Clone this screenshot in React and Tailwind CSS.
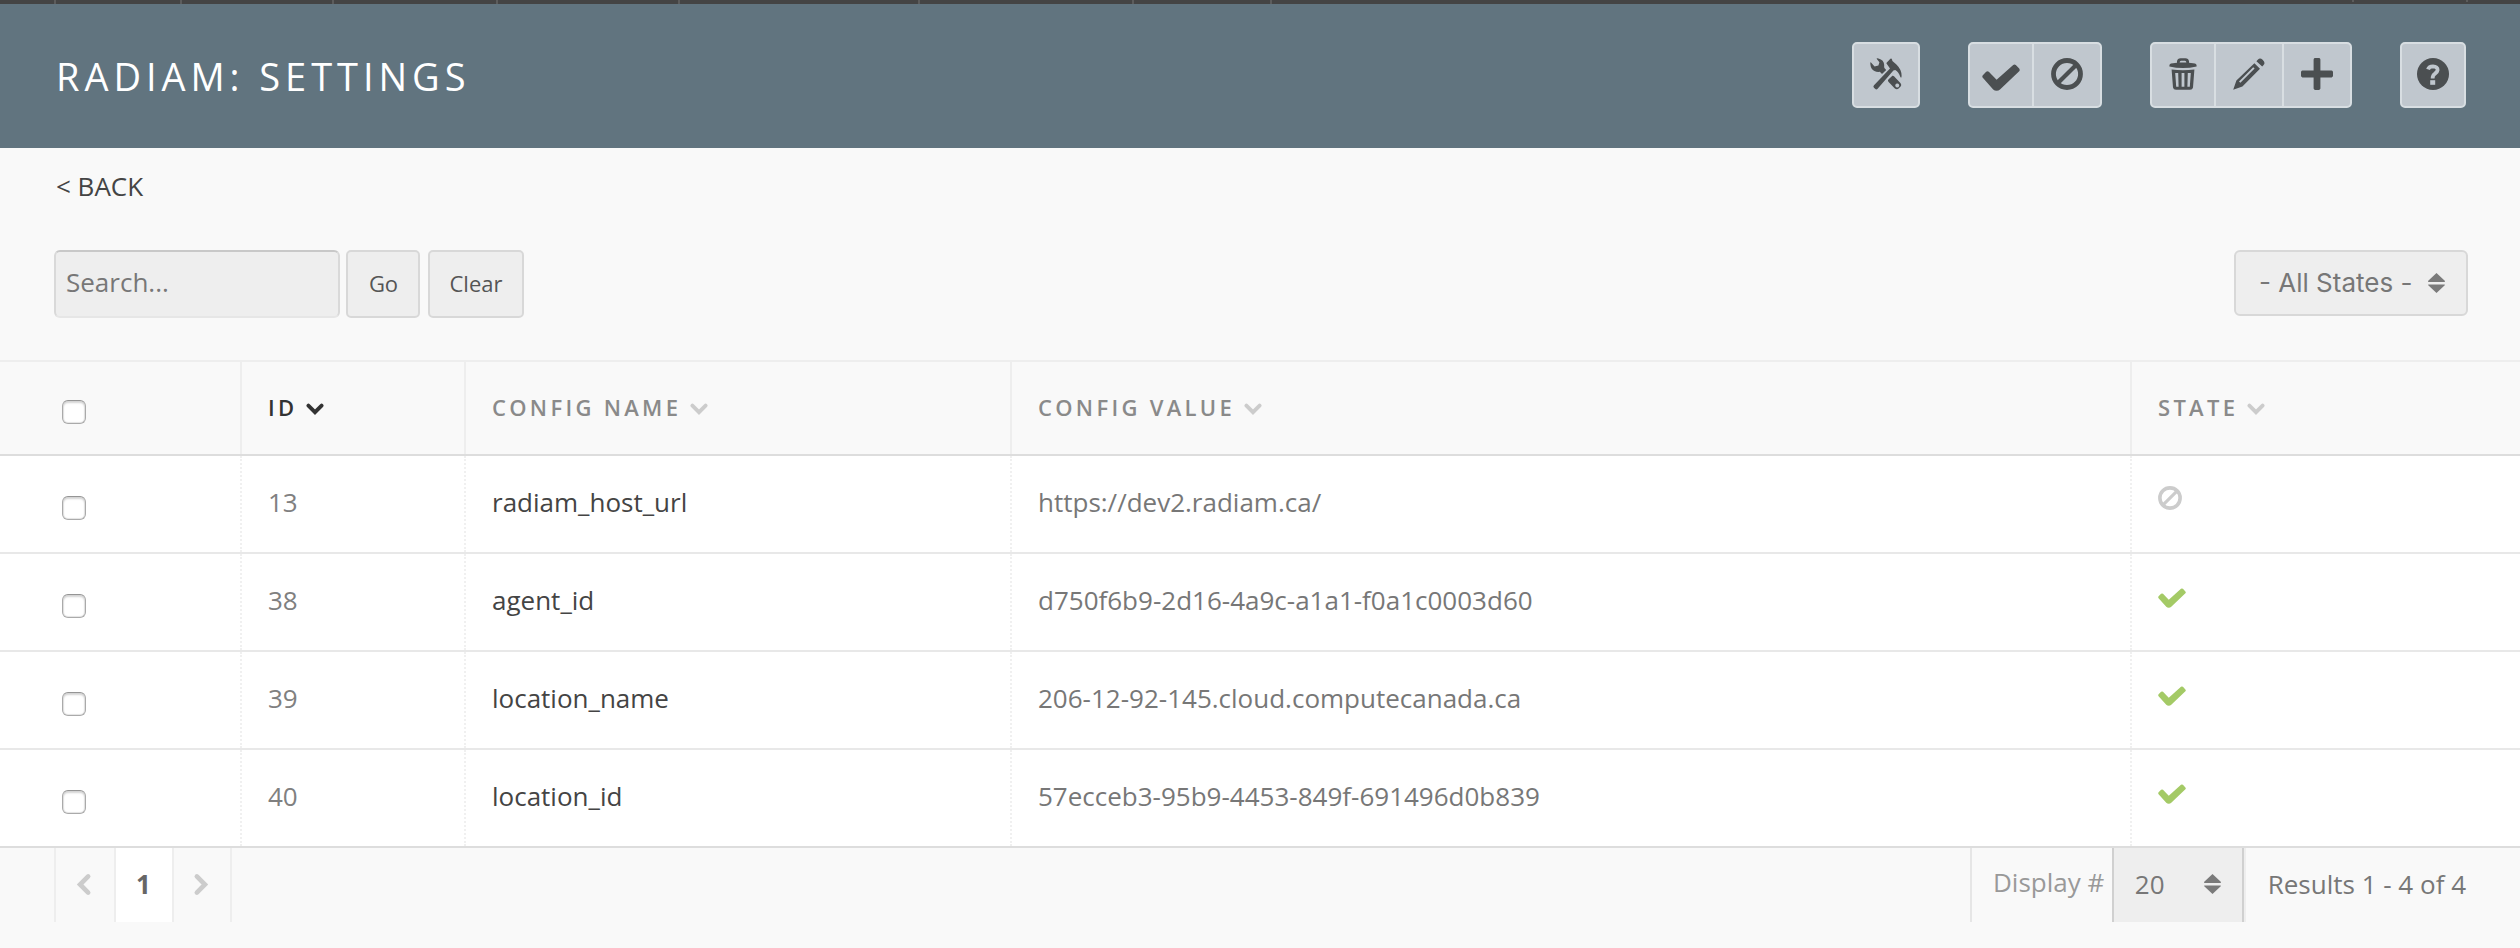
const FONT = "font-['Open_Sans','Liberation_Sans',sans-serif]";

const Svg = ({ vb, className, children }) => (
  <svg viewBox={vb} className={`block shrink-0 ${className}`} fill="currentColor">{children}</svg>
);

const Check = ({ className }) => (
  <Svg vb="0 0 38 27" className={className}>
    <path d="M0.8 11.2 L4.2 7.8 Q5.5 6.8 6.8 7.8 L14.6 15.8 L31.2 0.9 Q32.5 0 33.8 1 L37.2 4.6 Q38.2 6 37.2 7.2 L18 25.4 Q16.6 26.8 14.6 26.8 Q12.6 26.8 11.2 25.4 L0.8 13.8 Q-0.2 12.5 0.8 11.2 Z" />
  </Svg>
);

const Ban = ({ className }) => (
  <Svg vb="0 0 32 32" className={className}>
    <g fill="none" stroke="currentColor" strokeWidth="4.8">
      <circle cx="16" cy="16" r="13.5" />
      <path d="M6.4 25.6 L25.6 6.4" strokeWidth="4.2" />
    </g>
  </Svg>
);

const Tools = () => (
  <Svg vb="0 0 32 32" className="h-8 w-8">
    <path d="M0.4 6.4 Q0 3.6 1 4.6 L4.6 8.4 L8.4 7.6 L9.4 4.2 L6.6 0.8 Q6.4 0 8.4 0.4 Q14 1.8 14.2 7 Q14 9 14.4 10 L16.2 12 L12 16 L9.8 13.8 Q4.2 14.4 1.6 10.4 Q0.6 8.6 0.4 6.4 Z" />
    <path d="M18.4 21.6 L22.4 17.8 Q23.2 17.4 24 18.2 L30.6 25.2 Q32 26.8 30.6 28.6 L28.6 30.6 Q26.6 32 24.6 30.2 L18.4 23.8 Q17.4 22.6 18.4 21.6 Z M27.2 25.4 a2 2 0 1 0 0.1 0 Z" fillRule="evenodd" />
    <path d="M16.6 4.8 L20.4 0.8 Q21.4 0 22 1.4 L22.4 3 L26.4 6.4 Q31.6 11.4 31.6 17.6 Q31.6 20.8 30.4 19 Q28.4 13.6 25.2 12 L23.4 12.6 L7.4 31 Q6.4 32 5 30.8 L3.8 29.6 Q2.8 28.4 4 27.2 L20 10.4 L17.2 6.6 Q16 5.6 16.6 4.8 Z" />
  </Svg>
);

const Trash = () => (
  <Svg vb="0 0 28 32" className="h-8 w-7">
    <path fillRule="evenodd" d="M8 4.8 V3.2 Q8.4 0.2 11.6 0.2 H16.4 Q19.6 0.2 20 3.2 V4.8 L26 5.4 Q27.6 5.8 27.6 7.4 V8.4 Q21 10 14 10 Q7 10 0.4 8.4 V7.4 Q0.4 5.8 2 5.4 Z M10.6 4.6 H17.4 Q17.2 2.8 16 2.8 H12 Q10.8 2.8 10.6 4.6 Z" />
    <path fillRule="evenodd" d="M2.6 11.4 Q14 13 25.4 11.4 L24 29.6 Q23.6 31.8 21 31.8 H7 Q4.4 31.8 4 29.6 Z M6.2 15 L7.2 28.8 H9.6 L9.2 15 Z M12.6 15 V28.8 H15.4 V15 Z M18.8 15 L18.4 28.8 H20.8 L21.8 15 Z" />
  </Svg>
);

const Pencil = () => (
  <Svg vb="0 0 32 32" className="h-8 w-8">
    <path d="M25 1.6 Q27 -0.6 29.6 1.8 Q32.8 4.8 30.6 7 L29.2 8.6 L23.4 3.2 Z" />
    <path fillRule="evenodd" d="M21.4 5.2 L27 10.8 L9.4 28.6 L0.2 31.8 L3.4 22.6 Z M20.2 9.2 L6 23.4 L7.4 24.8 L21.6 10.6 Z" />
  </Svg>
);

const Plus = () => (
  <Svg vb="0 0 32 32" className="h-8 w-8">
    <path d="M12.6 1.4 Q12.8 0 14.2 0 H17.8 Q19.2 0 19.4 1.4 V12.6 H30.6 Q32 12.8 32 14.2 V17.8 Q32 19.2 30.6 19.4 H19.4 V30.6 Q19.2 32 17.8 32 H14.2 Q12.8 32 12.6 30.6 V19.4 H1.4 Q0 19.2 0 17.8 V14.2 Q0 12.8 1.4 12.6 H12.6 Z" />
  </Svg>
);

const Help = () => (
  <Svg vb="0 0 32 32" className="h-8 w-8">
    <circle cx="16" cy="16" r="16" />
    <path d="M11 11.4 Q12 8.4 16 8.4 Q20.8 8.6 20.6 12 Q20.4 14 18 15.6 Q15.6 17 15.6 20.6" fill="none" stroke="#c0c7ce" strokeWidth="3.8" />
    <rect x="13.2" y="22.2" width="5" height="4.6" fill="#c0c7ce" />
  </Svg>
);

const Chevron = ({ className }) => (
  <Svg vb="0 0 18 12" className={className}>
    <path d="M2.4 2.6 L9 9.2 L15.6 2.6" fill="none" stroke="currentColor" strokeWidth="3.8" strokeLinecap="round" />
  </Svg>
);

const Sort = () => (
  <Svg vb="0 0 17 20" className="h-5 w-[17px] text-[#7a7a7a]">
    <path d="M8.5 0 L17 8 Q17 9 16.4 9 H0.6 Q0 9 0 8 Z M0 12 Q0 11.4 0.6 11.4 H16.4 Q17 11.4 17 12 L8.5 20 Z" />
  </Svg>
);

const Group = ({ children, className = "" }) => (
  <div className={`flex h-[66px] divide-x-2 divide-[#d8dee2] overflow-hidden rounded-[5px] border-2 border-[#d8dee2] bg-[#c0c7ce] text-[#4b4f51] ${className}`}>{children}</div>
);
const Btn = ({ className, children }) => (
  <button className={`flex items-center justify-center pb-0.5 ${className}`}>{children}</button>
);

const Box = () => (
  <span className="block h-6 w-6 rounded-[6px] border border-x-[#aaa] border-t-[#959595] border-b-[#aaa] bg-white shadow-[inset_0_2px_2px_#d4d4d4,inset_0_0_1px_1px_#e4e4e4]" />
);

const COLS = "grid grid-cols-[240px_224px_546px_1120px_390px]";
const HEADS = [
  ["ID", "text-[#333]", "text-[#333]"],
  ["CONFIG NAME", "text-[#8a8a8a]", "text-[#ccc]"],
  ["CONFIG VALUE", "text-[#8a8a8a]", "text-[#ccc]"],
  ["STATE", "text-[#8a8a8a]", "text-[#ccc]"],
];
const ROWS = [
  ["13", "radiam_host_url", "https://dev2.radiam.ca/", false],
  ["38", "agent_id", "d750f6b9-2d16-4a9c-a1a1-f0a1c0003d60", true],
  ["39", "location_name", "206-12-92-145.cloud.computecanada.ca", true],
  ["40", "location_id", "57ecceb3-95b9-4453-849f-691496d0b839", true],
];

export default function App() {
  return (
    <div className={`flex h-[948px] w-[2520px] flex-col overflow-hidden bg-[#f9f9f9] text-[26px] leading-[36px] text-[#777] ${FONT}`}>
      <div className="flex h-1 shrink-0 bg-[#444]">
        <i className="w-[54px]" />
        <i className="w-[126px] border-l-2 border-[#5c5c5c]" />
        <i className="w-[152px] border-l-2 border-[#5c5c5c]" />
        <i className="w-[164px] border-l-2 border-[#5c5c5c]" />
        <i className="w-[182px] border-l-2 border-[#5c5c5c]" />
        <i className="w-[240px] border-l-2 border-[#5c5c5c]" />
        <i className="w-[214px] border-l-2 border-[#5c5c5c]" />
        <i className="w-[138px] border-l-2 border-[#5c5c5c]" />
        <i className="w-[1082px] border-l-2 border-[#5c5c5c]" />
        <i className="h-0.5 w-[114px] border-l-2 border-[#5c5c5c]" />
        <i className="h-0.5 border-l-2 border-[#5c5c5c]" />
      </div>

      <header className="flex h-36 shrink-0 items-start justify-between bg-[#61747f] pl-14 pr-[54px]">
        <h1 className="pt-[47px] text-[38px] leading-[50px] tracking-[4.95px] text-white">RADIAM: SETTINGS</h1>
        <div className="flex gap-12 pt-[38px]">
          <Group><Btn className="w-16"><Tools /></Btn></Group>
          <Group>
            <Btn className="w-16"><Check className="mt-1.5 h-[27px] w-[38px]" /></Btn>
            <Btn className="w-[66px]"><Ban className="h-8 w-8" /></Btn>
          </Group>
          <Group>
            <Btn className="w-16"><Trash /></Btn>
            <Btn className="w-[68px]"><Pencil /></Btn>
            <Btn className="w-[66px]"><Plus /></Btn>
          </Group>
          <Group><Btn className="w-[62px]"><Help /></Btn></Group>
        </div>
      </header>

      <a className="mt-5 ml-14 shrink-0 text-[#444]">&lt; BACK</a>

      <div className="mt-[46px] flex h-[68px] shrink-0 pl-[54px] pr-[52px]">
        <div className="flex w-[286px] items-center rounded-[6px] border-2 border-x-[#d9d9d9] border-t-[#c8c8c8] border-b-[#e6e6e6] bg-[#eee] pl-[10px] pb-1">Search...</div>
        <button className="ml-1.5 w-[74px] rounded-[5px] border-2 border-[#d8d8d8] bg-[#eee] pb-0.5 pl-px text-[22px] text-[#555]">Go</button>
        <button className="ml-2 w-24 rounded-[5px] border-2 border-[#d8d8d8] bg-[#eee] pb-0.5 text-[22px] text-[#555]">Clear</button>
        <div className="ml-auto flex h-[66px] w-[234px] items-center justify-between rounded-[6px] border-2 border-[#d8d8d8] bg-[#eee] pl-[23px] pr-[21px] font-[Inter,sans-serif] text-[26px]">
          <span className="whitespace-nowrap">- All States -</span>
          <Sort />
        </div>
      </div>

      <div className={`mt-[42px] h-24 shrink-0 border-y-2 border-t-[#eee] border-b-[#ddd] ${COLS}`}>
        <div className="pl-[62px] pt-[38px]"><Box /></div>
        {HEADS.map(([t, c, ic]) => (
          <div key={t} className={`flex items-start border-l-2 border-[#eee] pl-[26px] pt-[30px] text-[22px] leading-[30px] font-semibold tracking-[3.3px] ${c}`}>
            {t}
            <Chevron className={`ml-[9px] mt-[11px] h-3 w-[18px] ${ic}`} />
          </div>
        ))}
      </div>

      {ROWS.map(([id, name, value, on], i) => (
        <div key={id} className={`h-[98px] shrink-0 border-b-2 bg-white ${i === 3 ? "border-[#ddd]" : "border-[#e8e8e8]"} ${COLS}`}>
          <div className="pl-[62px] pt-10"><Box /></div>
          <div className="border-l-2 border-dotted border-[#f0f0f0] pl-[26px] pt-[28px] text-[#808080]">{id}</div>
          <div className="border-l-2 border-dotted border-[#f0f0f0] pl-[26px] pt-[28px] text-[#444]">{name}</div>
          <div className="border-l-2 border-dotted border-[#f0f0f0] pl-[26px] pt-[28px]">{value}</div>
          <div className="border-l-2 border-dotted border-[#f0f0f0] pl-[26px]">
            {on ? <Check className="mt-[34px] h-5 w-7 text-[#a4ca66]" /> : <Ban className="mt-[30px] h-6 w-6 text-[#ccc]" />}
          </div>
        </div>
      ))}

      <footer className="flex h-[74px] shrink-0 pl-[54px] pr-[54px]">
        <div className="flex w-[60px] items-center justify-center border-l-2 border-[#eee] pr-[3px] pb-0.5">
          <Chevron className="h-[15px] w-[22px] rotate-90 text-[#ccc]" />
        </div>
        <div className="w-[58px] border-l-2 border-[#eee] bg-white pr-px pt-[18px] text-center font-bold text-[#666]">1</div>
        <div className="flex w-[60px] items-center justify-center border-x-2 border-[#eee] pr-[3px] pb-0.5">
          <Chevron className="h-[15px] w-[22px] -rotate-90 text-[#ccc]" />
        </div>
        <div className="ml-auto flex w-[496px] border-l-2 border-[#e6e6e6]">
          <span className="w-[140px] whitespace-nowrap pl-[21px] pt-4 text-[#999]">Display #</span>
          <div className="flex w-[132px] items-center justify-between border-x-2 border-[#d0d0d0] bg-[#eee] pb-0.5 pl-[21px] pr-[21px]">
            <span>20</span>
            <Sort />
          </div>
          <span className="whitespace-nowrap border-l-2 border-[#eee] pl-[22px] pt-[18px]">Results 1 - 4 of 4</span>
        </div>
      </footer>
    </div>
  );
}
